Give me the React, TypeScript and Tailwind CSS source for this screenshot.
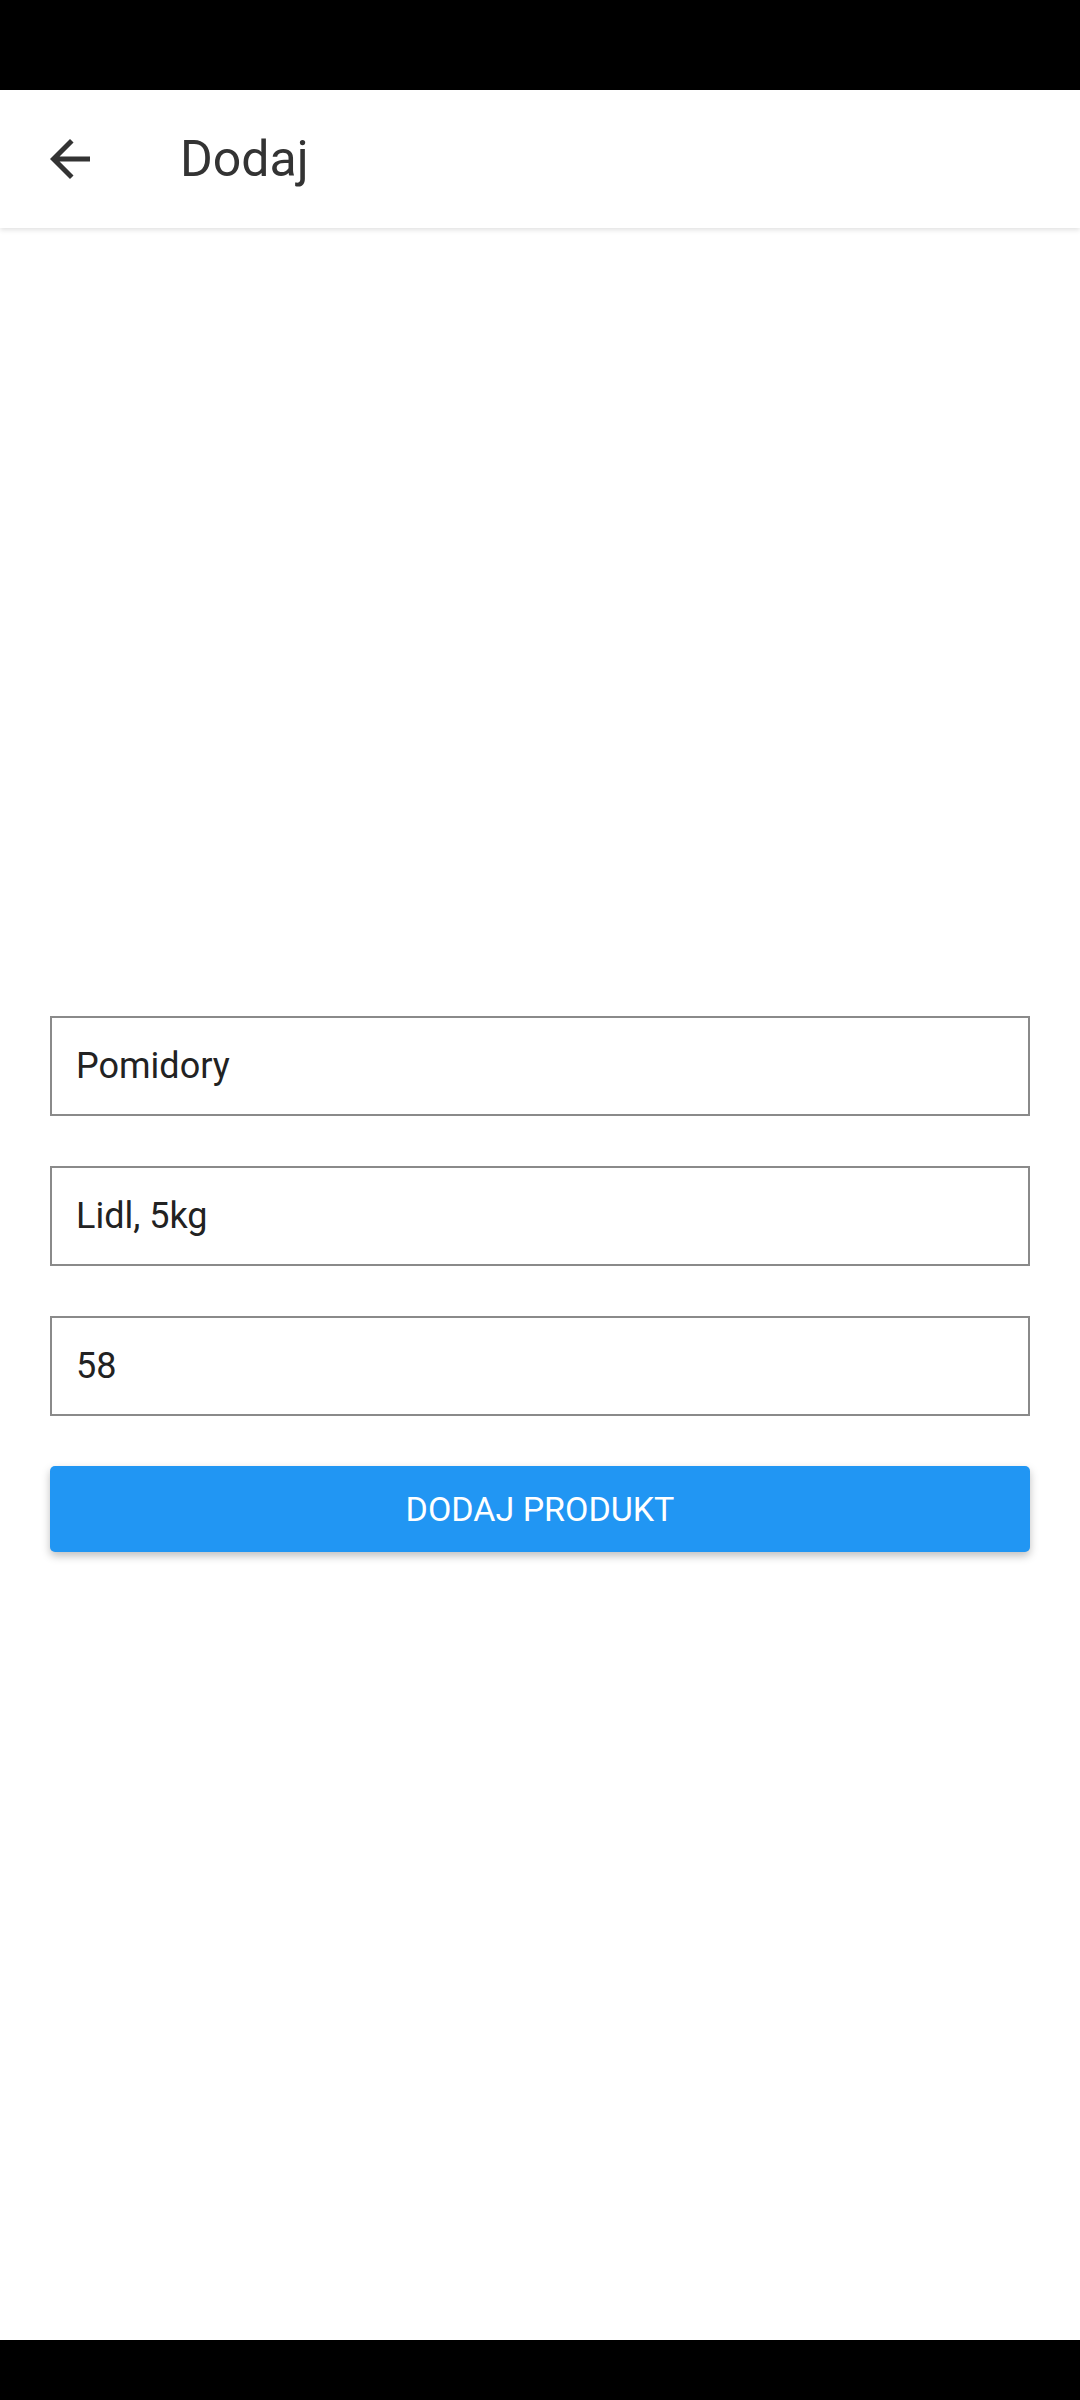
import { useState } from 'react';

export default function App() {
  const [name, setName] = useState('Pomidory');
  const [desc, setDesc] = useState('Lidl, 5kg');
  const [price, setPrice] = useState('58');

  const inputCls =
    'w-full h-[100px] border-2 border-[#8a8a8a] bg-white px-[24px] text-[36px] text-[#222222] outline-none';

  return (
    <div className="flex flex-col h-[2400px] w-[1080px] bg-white" style={{ fontFamily: 'Roboto, "Noto Sans", sans-serif' }}>
      {/* status bar */}
      <div className="h-[90px] bg-black shrink-0" />

      {/* app bar */}
      <div className="relative z-10 h-[138px] shrink-0 flex items-center bg-white shadow-[0_2px_5px_rgba(0,0,0,0.12)]">
        <button className="ml-[40px] w-[60px] h-[60px] flex items-center justify-center text-[#333333]">
          <svg viewBox="0 0 24 24" width="60" height="60" fill="currentColor">
            <path d="M20 11H7.83l5.59-5.59L12 4l-8 8 8 8 1.41-1.41L7.83 13H20v-2z" />
          </svg>
        </button>
        <h1 className="ml-[80px] text-[50px] leading-none text-[#333333]">Dodaj</h1>
      </div>

      {/* form */}
      <div className="flex-1 flex flex-col justify-center px-[50px]">
        <div className="flex flex-col gap-[50px]">
          <input className={inputCls} value={name} onChange={e => setName(e.target.value)} />
          <input className={inputCls} value={desc} onChange={e => setDesc(e.target.value)} />
          <input className={inputCls} value={price} onChange={e => setPrice(e.target.value)} />
          <button className="h-[86px] w-full rounded-[5px] bg-[#2196f3] text-white text-[34px] shadow-[0_4px_8px_rgba(0,0,0,0.25)]">
            DODAJ PRODUKT
          </button>
        </div>
      </div>

      {/* nav bar */}
      <div className="h-[60px] bg-black shrink-0" />
    </div>
  );
}
